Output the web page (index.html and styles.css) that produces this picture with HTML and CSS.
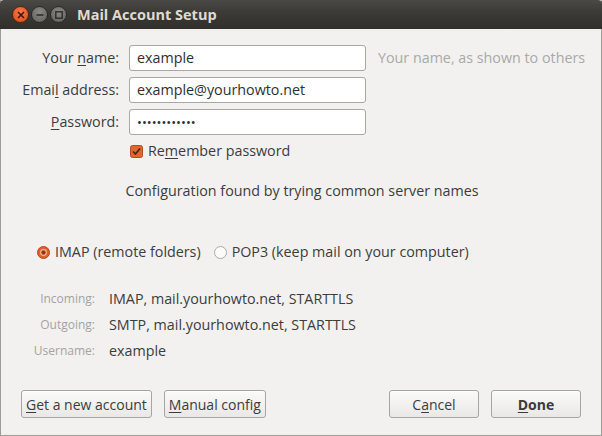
FILE: index.html
```html
<!DOCTYPE html>
<html lang="en">
<head>
    <meta charset="UTF-8">
    <title>Mail Account Setup</title>
    <link rel="stylesheet" href="styles.css">
</head>
<body>
    <div class="window">
        <div class="titlebar">
            <div class="controls">
                <span class="ctl close">
                    <svg width="8" height="8" viewBox="0 0 8 8"><path d="M1 1L7 7M7 1L1 7" stroke="#3a1a0e" stroke-width="1.6"/></svg>
                </span>
                <span class="ctl">
                    <svg width="8" height="8" viewBox="0 0 8 8"><path d="M0.5 4H7.5" stroke="#2d2d2b" stroke-width="1.6"/></svg>
                </span>
                <span class="ctl">
                    <svg width="8" height="8" viewBox="0 0 8 8"><rect x="0.8" y="0.8" width="6.4" height="6.4" fill="none" stroke="#2d2d2b" stroke-width="1.4"/></svg>
                </span>
            </div>
            <div class="title">Mail Account Setup</div>
        </div>

        <div class="content">
            <div class="form">
                <label class="lbl">Your <u>n</u>ame:</label>
                <div class="field">example</div>
                <div class="hint">Your name, as shown to others</div>

                <label class="lbl">Emai<u>l</u> address:</label>
                <div class="field">example@yourhowto.net</div>
                <div></div>

                <label class="lbl"><u>P</u>assword:</label>
                <div class="field dots">••••••••••••</div>
                <div></div>

                <div></div>
                <div class="check">
                    <svg width="13" height="13" viewBox="0 0 13 13">
                        <rect x="0.5" y="0.5" width="12" height="12" rx="2" fill="#e2672f" stroke="#b24d1f"/>
                        <path d="M3 6.5L5.5 9L10 3.5" fill="none" stroke="#4a2412" stroke-width="1.7"/>
                    </svg>
                    <span>Re<u>m</u>ember password</span>
                </div>
            </div>

            <div class="status">Configuration found by trying common server names</div>

            <div class="protocols">
                <span class="radio">
                    <svg width="13" height="13" viewBox="0 0 13 13">
                        <circle cx="6.5" cy="6.5" r="6" fill="#e0602b" stroke="#b9491c"/>
                        <circle cx="6.5" cy="6.5" r="3.4" fill="#f7b596"/>
                        <circle cx="6.5" cy="6.5" r="2.2" fill="#9a3412"/>
                    </svg>
                    IMAP (remote folders)
                </span>
                <span class="radio">
                    <svg width="13" height="13" viewBox="0 0 13 13">
                        <circle cx="6.5" cy="6.5" r="6" fill="#fbfbfb" stroke="#a9a9a7"/>
                    </svg>
                    POP3 (keep mail on your computer)
                </span>
            </div>

            <div class="servers">
                <span class="key">Incoming:</span>
                <span>IMAP, mail.yourhowto.net, STARTTLS</span>
                <span class="key">Outgoing:</span>
                <span>SMTP, mail.yourhowto.net, STARTTLS</span>
                <span class="key">Username:</span>
                <span>example</span>
            </div>

            <div class="buttons">
                <div class="group">
                    <button><u>G</u>et a new account</button>
                    <button><u>M</u>anual config</button>
                </div>
                <div class="group">
                    <button class="wide">C<u>a</u>ncel</button>
                    <button class="wide primary"><u>D</u>one</button>
                </div>
            </div>
        </div>
    </div>
</body>
</html>
```

FILE: styles.css
```css
body {
    margin: 0;
    font-family: "Open Sans", "DejaVu Sans", sans-serif;
    font-size: 14.3px;
    line-height: 20px;
    color: #3c3c3c;
}

.window {
    width: 602px;
    height: 436px;
    box-sizing: border-box;
    background: #f2f1f0;
    border: 1px solid #9e9c97;
    border-top: none;
    display: flex;
    flex-direction: column;
}

u {
    text-decoration-thickness: 1px;
    text-underline-offset: 2px;
}

/* title bar */
.titlebar {
    height: 29px;
    margin: 0 -1px;
    background: linear-gradient(#4a4944, #3c3b37 40%, #302f2b);
    display: flex;
    align-items: center;
    border-radius: 4px 4px 0 0;
}
.controls {
    display: flex;
    gap: 2px;
    padding-left: 12px;
}
.ctl {
    width: 17px;
    height: 17px;
    border-radius: 50%;
    background: radial-gradient(circle at 50% 35%, #8a8983, #5f5e59);
    border: 1px solid #2a2926;
    box-sizing: border-box;
    display: flex;
    align-items: center;
    justify-content: center;
}
.ctl.close {
    background: radial-gradient(circle at 50% 35%, #f8794a, #dd4a17);
    border-color: #5a2410;
}
.title {
    margin-left: 10px;
    font-weight: bold;
    font-size: 14.5px;
    color: #dfdbd2;
}

/* body */
.content {
    flex: 1;
    display: flex;
    flex-direction: column;
}

.form {
    display: grid;
    grid-template-columns: 118px 237px auto;
    grid-template-rows: 26px 26px 26px 20px;
    column-gap: 10px;
    row-gap: 6px;
    margin-top: 16px;
    align-items: center;
}
.lbl {
    text-align: right;
}
.field {
    height: 26px;
    box-sizing: border-box;
    border: 1px solid #aaa8a3;
    border-radius: 3px;
    background: #fff;
    padding: 0 7px;
    line-height: 24px;
    color: #2f2f2f;
}
.dots {
    font-size: 13px;
    letter-spacing: 0;
}
.hint {
    margin-left: 2px;
    color: #a9a9a7;
}
.check {
    display: flex;
    align-items: center;
    gap: 5px;
    margin-left: 1px;
}

.status {
    text-align: center;
    margin-top: 20px;
    margin-left: 2px;
}

.protocols {
    display: flex;
    gap: 13px;
    margin: 41px 0 0 36px;
}
.radio {
    display: flex;
    align-items: center;
    gap: 5px;
}

.servers {
    display: grid;
    grid-template-columns: 94px auto;
    column-gap: 14px;
    grid-auto-rows: 26px;
    align-items: center;
    margin-top: 24px;
}
.key {
    text-align: right;
    font-size: 12px;
    color: #a3a3a1;
}

.buttons {
    display: flex;
    justify-content: space-between;
    margin: auto 20px 17px 20px;
}
.group {
    display: flex;
    gap: 12px;
}
button {
    height: 28px;
    font-family: inherit;
    font-size: 14px;
    color: #3c3c3c;
    padding: 0 4px;
    border: 1px solid #a7a5a0;
    border-radius: 3px;
    background: linear-gradient(#fafaf9, #e9e8e6);
    box-shadow: inset 0 1px 0 #fff;
}
button.wide {
    width: 90px;
}
button.primary {
    font-weight: bold;
}
```
